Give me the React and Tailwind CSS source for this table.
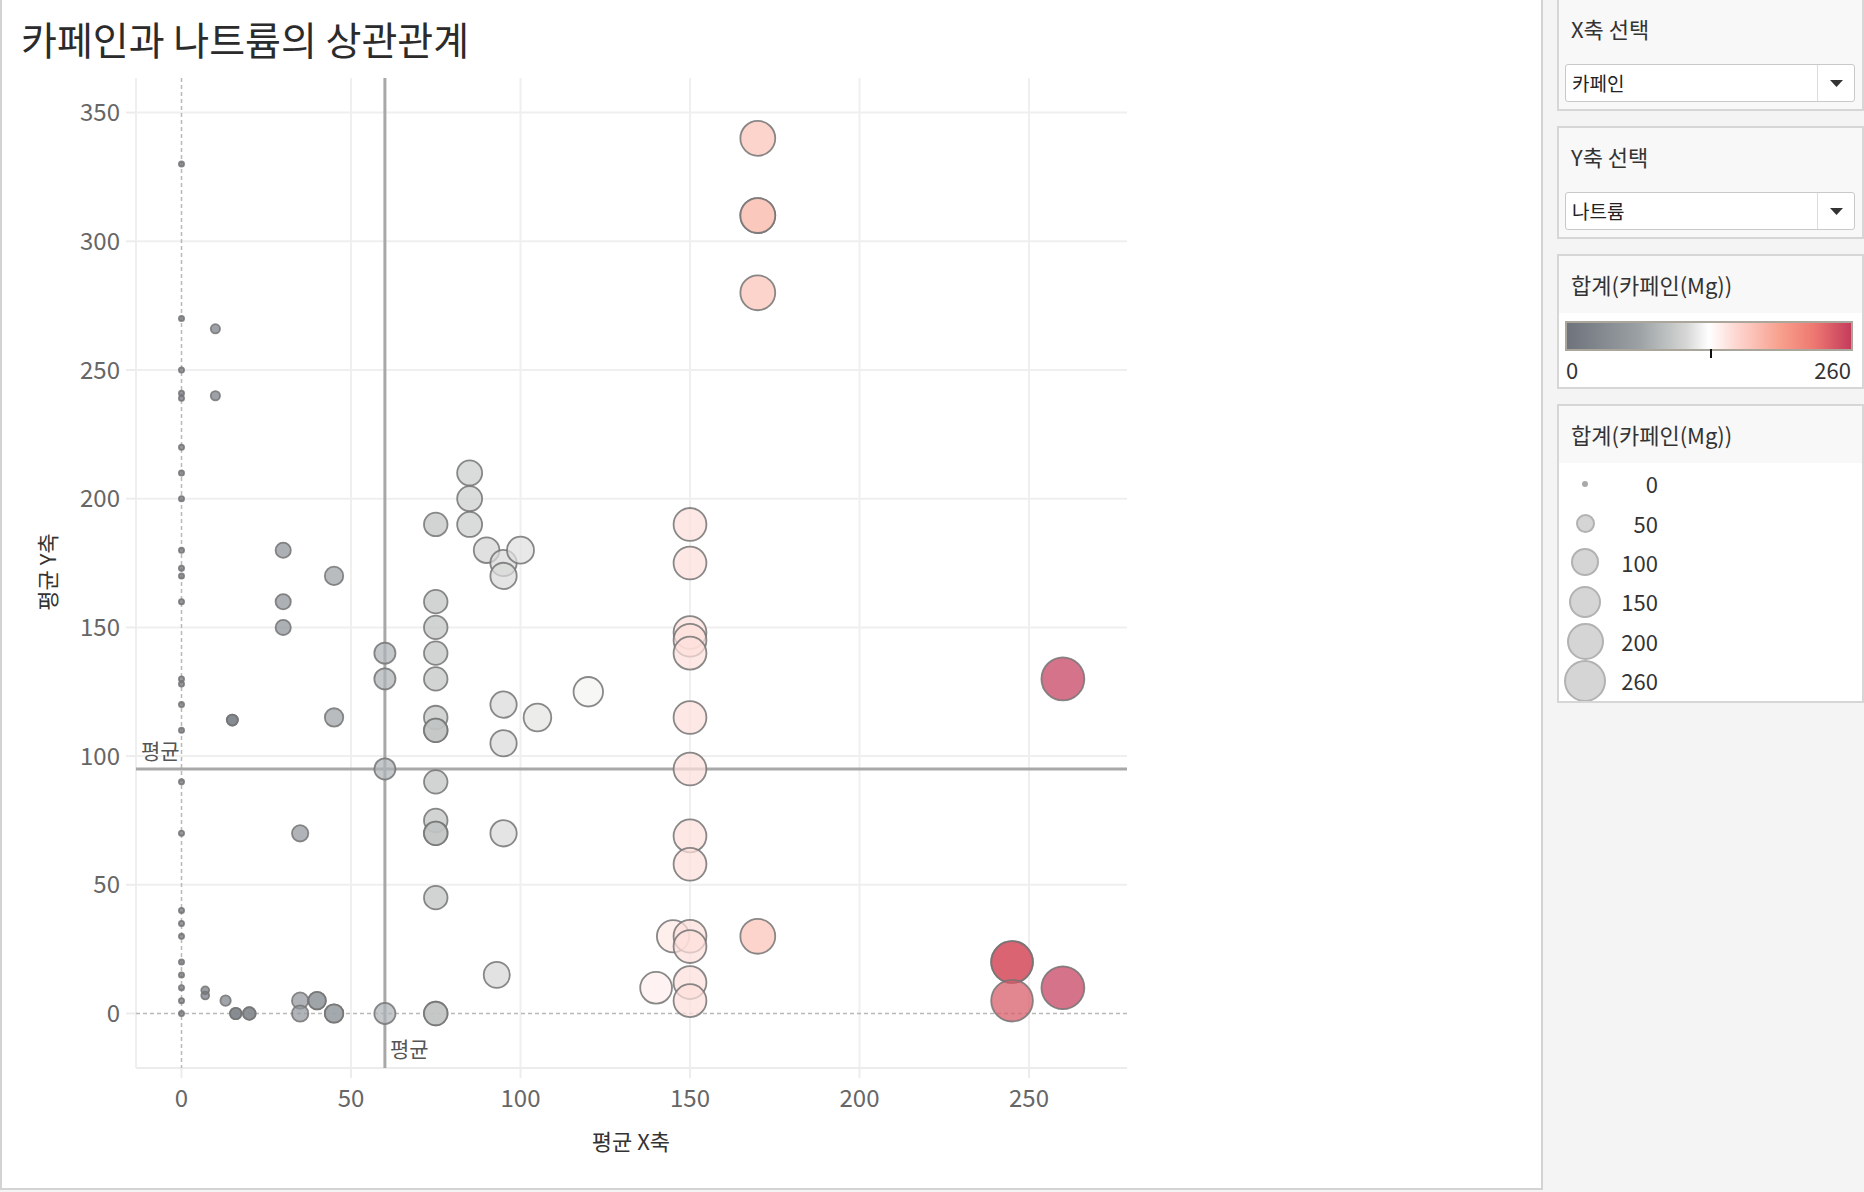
import React from "react";

// chart scale (page pixels)
const X = (v) => 181.5 + v * 3.39;
const Y = (v) => 1013.5 - v * 2.574;

const PLOT = { left: 136, right: 1127, top: 78, bottom: 1068 };

const STOPS = [
  [0, [110, 115, 124]],
  [0.15, [150, 155, 160]],
  [0.3, [196, 199, 199]],
  [0.42, [233, 233, 231]],
  [0.5, [255, 255, 255]],
  [0.6, [253, 214, 208]],
  [0.75, [248, 162, 144]],
  [0.87, [238, 120, 112]],
  [1, [196, 61, 92]],
];

function colorFor(v) {
  const t = Math.max(0, Math.min(1, v / 260));
  for (let i = 1; i < STOPS.length; i++) {
    const [t1, c1] = STOPS[i];
    const [t0, c0] = STOPS[i - 1];
    if (t <= t1) {
      const f = (t - t0) / (t1 - t0);
      const c = c0.map((a, k) => Math.round(a + (c1[k] - a) * f));
      return `rgb(${c[0]},${c[1]},${c[2]})`;
    }
  }
  return "rgb(196,61,92)";
}

const radiusFor = (v) => Math.max(2.6, (2.6 * Math.sqrt(v) + 1) / 2);

// caffeine (x), sodium (y)
const zeroCol = [330, 270, 250, 241, 239, 220, 210, 200, 180, 173, 170, 160, 130, 128, 120, 110, 90, 70, 40, 35, 30, 20, 15, 10, 5, 0];
const col75 = [190, 160, 150, 140, 130, 115, 110, 110, 90, 75, 70, 70, 45, 0, 0];
const col150 = [190, 175, 148, 145, 140, 115, 95, 69, 58, 30, 26, 12, 5];

const points = [
  ...zeroCol.map((y) => [0, y]),
  [10, 266], [10, 240], [15, 114], [15, 114],
  [30, 180], [30, 160], [30, 150], [45, 170], [45, 115], [35, 70],
  [7, 9], [7, 7], [13, 5], [16, 0], [16, 0], [20, 0], [20, 0],
  [35, 5], [35, 0], [40, 5], [40, 5], [45, 0], [45, 0],
  [60, 140], [60, 130], [60, 95], [60, 0],
  ...col75.map((y) => [75, y]),
  [85, 210], [85, 200], [85, 190],
  [90, 180], [95, 175], [95, 170], [100, 180],
  [95, 120], [95, 105], [95, 70], [105, 115], [120, 125], [93, 15],
  [145, 30], [140, 10],
  ...col150.map((y) => [150, y]),
  [170, 340], [170, 310], [170, 310], [170, 280], [170, 30],
  [245, 20], [245, 20], [245, 5],
  [260, 130], [260, 10],
];

const yTicks = [0, 50, 100, 150, 200, 250, 300, 350];
const xTicks = [0, 50, 100, 150, 200, 250];

function ScatterChart() {
  return (
    <svg width="1539" height="1110" viewBox="2 78 1539 1110" className="block">
      {/* grid */}
      {yTicks.filter((v) => v > 0).map((v) => (
        <line key={`gy${v}`} x1={PLOT.left} x2={PLOT.right} y1={Y(v)} y2={Y(v)} stroke="#efefef" strokeWidth="2" />
      ))}
      {xTicks.filter((v) => v > 0).map((v) => (
        <line key={`gx${v}`} x1={X(v)} x2={X(v)} y1={PLOT.top} y2={PLOT.bottom} stroke="#efefef" strokeWidth="2" />
      ))}
      <line x1={PLOT.left} x2={PLOT.left} y1={PLOT.top} y2={PLOT.bottom} stroke="#efefef" strokeWidth="2" />
      <line x1={PLOT.left} x2={PLOT.right} y1={PLOT.bottom} y2={PLOT.bottom} stroke="#ececec" strokeWidth="2" />

      {/* ticks */}
      {yTicks.map((v) => (
        <line key={`ty${v}`} x1="126" x2={PLOT.left} y1={Y(v)} y2={Y(v)} stroke="#ececec" strokeWidth="2" />
      ))}
      {xTicks.map((v) => (
        <line key={`tx${v}`} x1={X(v)} x2={X(v)} y1={PLOT.bottom} y2="1078" stroke="#ececec" strokeWidth="2" />
      ))}

      {/* zero lines */}
      <line x1={X(0)} x2={X(0)} y1={PLOT.top} y2={PLOT.bottom} stroke="#b9b9b9" strokeWidth="1.5" strokeDasharray="4 3" />
      <line x1={PLOT.left} x2={PLOT.right} y1={Y(0)} y2={Y(0)} stroke="#b9b9b9" strokeWidth="1.5" strokeDasharray="4 3" />

      {/* average lines */}
      <line x1={X(60)} x2={X(60)} y1={PLOT.top} y2={PLOT.bottom} stroke="#a8a8a8" strokeWidth="3" />
      <line x1={PLOT.left} x2={PLOT.right} y1={Y(95)} y2={Y(95)} stroke="#a8a8a8" strokeWidth="3" />

      {/* marks */}
      {points.map(([x, y], i) => (
        <circle
          key={i}
          cx={X(x)}
          cy={Y(y)}
          r={radiusFor(x)}
          fill={colorFor(x)}
          fillOpacity="0.72"
          stroke="#747474"
          strokeOpacity="0.85"
          strokeWidth="1.8"
        />
      ))}

      <g fontFamily="'Noto Sans CJK KR', 'Noto Sans', sans-serif">
        {yTicks.map((v) => (
          <text key={`ly${v}`} x="120" y={Y(v)} dy="0.36em" textAnchor="end" fontSize="24" fill="#666">
            {v}
          </text>
        ))}
        {xTicks.map((v) => (
          <text key={`lx${v}`} x={X(v)} y="1098" dy="0.36em" textAnchor="middle" fontSize="24" fill="#666">
            {v}
          </text>
        ))}
        <text x="141" y="751" dy="0.36em" fontSize="21" fill="#555">평균</text>
        <text x="390" y="1049" dy="0.36em" fontSize="21" fill="#555">평균</text>
        <text x="631" y="1142" dy="0.36em" textAnchor="middle" fontSize="22" fill="#333">평균 X축</text>
        <text x="48" y="572" dy="0.36em" textAnchor="middle" fontSize="22" fill="#333" transform="rotate(-90 48 572)">
          평균 Y축
        </text>
      </g>
    </svg>
  );
}

function Dropdown({ value }) {
  return (
    <div className="mx-[6px] flex h-[38px] w-[290px] items-center rounded-[3px] border border-[#c9c9c9] bg-white">
      <span className="flex-1 pl-[6px] text-[19px] text-[#222]">{value}</span>
      <span className="flex h-full w-[37px] items-center justify-center border-l border-[#dcdcdc]">
        <svg width="13" height="7" viewBox="0 0 13 7">
          <polygon points="0,0 13,0 6.5,7" fill="#333" />
        </svg>
      </span>
    </div>
  );
}

function SelectCard({ title, value, className = "" }) {
  return (
    <section className={`w-[307px] border-2 border-[#d6d6d6] bg-[#f8f8f8] pb-[7px] ${className}`}>
      <div className="flex h-[56px] items-center pl-[12px] text-[22px] text-[#333]">{title}</div>
      <div className="pt-[8px]">
        <Dropdown value={value} />
      </div>
    </section>
  );
}

const sizeLegend = [
  { label: "0", dot: "h-[6px] w-[6px] bg-[#a9a9a9]" },
  { label: "50", dot: "h-[19px] w-[19px] border-2 border-[#b2b2b2] bg-[#d5d5d5]" },
  { label: "100", dot: "h-[28px] w-[28px] border-2 border-[#b2b2b2] bg-[#d5d5d5]" },
  { label: "150", dot: "h-[32px] w-[32px] border-2 border-[#b2b2b2] bg-[#d5d5d5]" },
  { label: "200", dot: "h-[37px] w-[37px] border-2 border-[#b2b2b2] bg-[#d5d5d5]" },
  { label: "260", dot: "h-[42px] w-[42px] border-2 border-[#b2b2b2] bg-[#d5d5d5]" },
];

export default function App() {
  return (
    <div className="flex h-[1192px] w-[1864px] overflow-hidden bg-[#f4f4f4] font-['Noto_Sans_CJK_KR','Noto_Sans',sans-serif]">
      <main className="flex h-[1190px] w-[1543px] shrink-0 flex-col border-x-2 border-b-2 border-[#d3d3d3] bg-white">
        <h1 className="h-[78px] pl-[19px] text-[39px] leading-[76px] font-normal text-[#2b2b2b]">
          카페인과 나트륨의 상관관계
        </h1>
        <ScatterChart />
      </main>

      <aside className="flex flex-col gap-[15px] pl-[14px]">
        <SelectCard title="X축 선택" value="카페인" className="-mt-[2px]" />
        <SelectCard title="Y축 선택" value="나트륨" />

        <section className="w-[307px] border-2 border-[#d6d6d6] bg-[#f8f8f8]">
          <div className="flex h-[57px] items-center pl-[12px] text-[22px] text-[#333]">합계(카페인(Mg))</div>
          <div className="h-[74px] bg-white px-[6px] pt-[8px]">
            <div className="relative h-[30px] w-[288px] border-2 border-[#aaa69c] bg-[linear-gradient(to_right,#6e737c,#9aa0a3_25%,#d6d7d5_42%,#ffffff_50%,#fdd5cf_60%,#f8a08e_75%,#ee7871_87%,#c43c5c)]">
              <span className="absolute left-[143px] top-[26px] h-[9px] w-[2px] bg-[#111]" />
            </div>
            <div className="mt-[5px] flex w-[288px] justify-between pl-[1px] pr-[2px] text-[22px] leading-[26px] text-[#333]">
              <span>0</span>
              <span>260</span>
            </div>
          </div>
        </section>

        <section className="w-[307px] border-2 border-[#d6d6d6] bg-[#f8f8f8]">
          <div className="flex h-[57px] items-center pl-[12px] text-[22px] text-[#333]">합계(카페인(Mg))</div>
          <div className="h-[238px] overflow-hidden bg-white pt-[1px]">
            {sizeLegend.map((row) => (
              <div key={row.label} className="flex h-[39.4px] items-center">
                <div className="flex w-[52px] justify-center">
                  <span className={`block shrink-0 rounded-full ${row.dot}`} />
                </div>
                <span className="w-[47px] text-right text-[22px] text-[#333]">{row.label}</span>
              </div>
            ))}
          </div>
        </section>
      </aside>
    </div>
  );
}
